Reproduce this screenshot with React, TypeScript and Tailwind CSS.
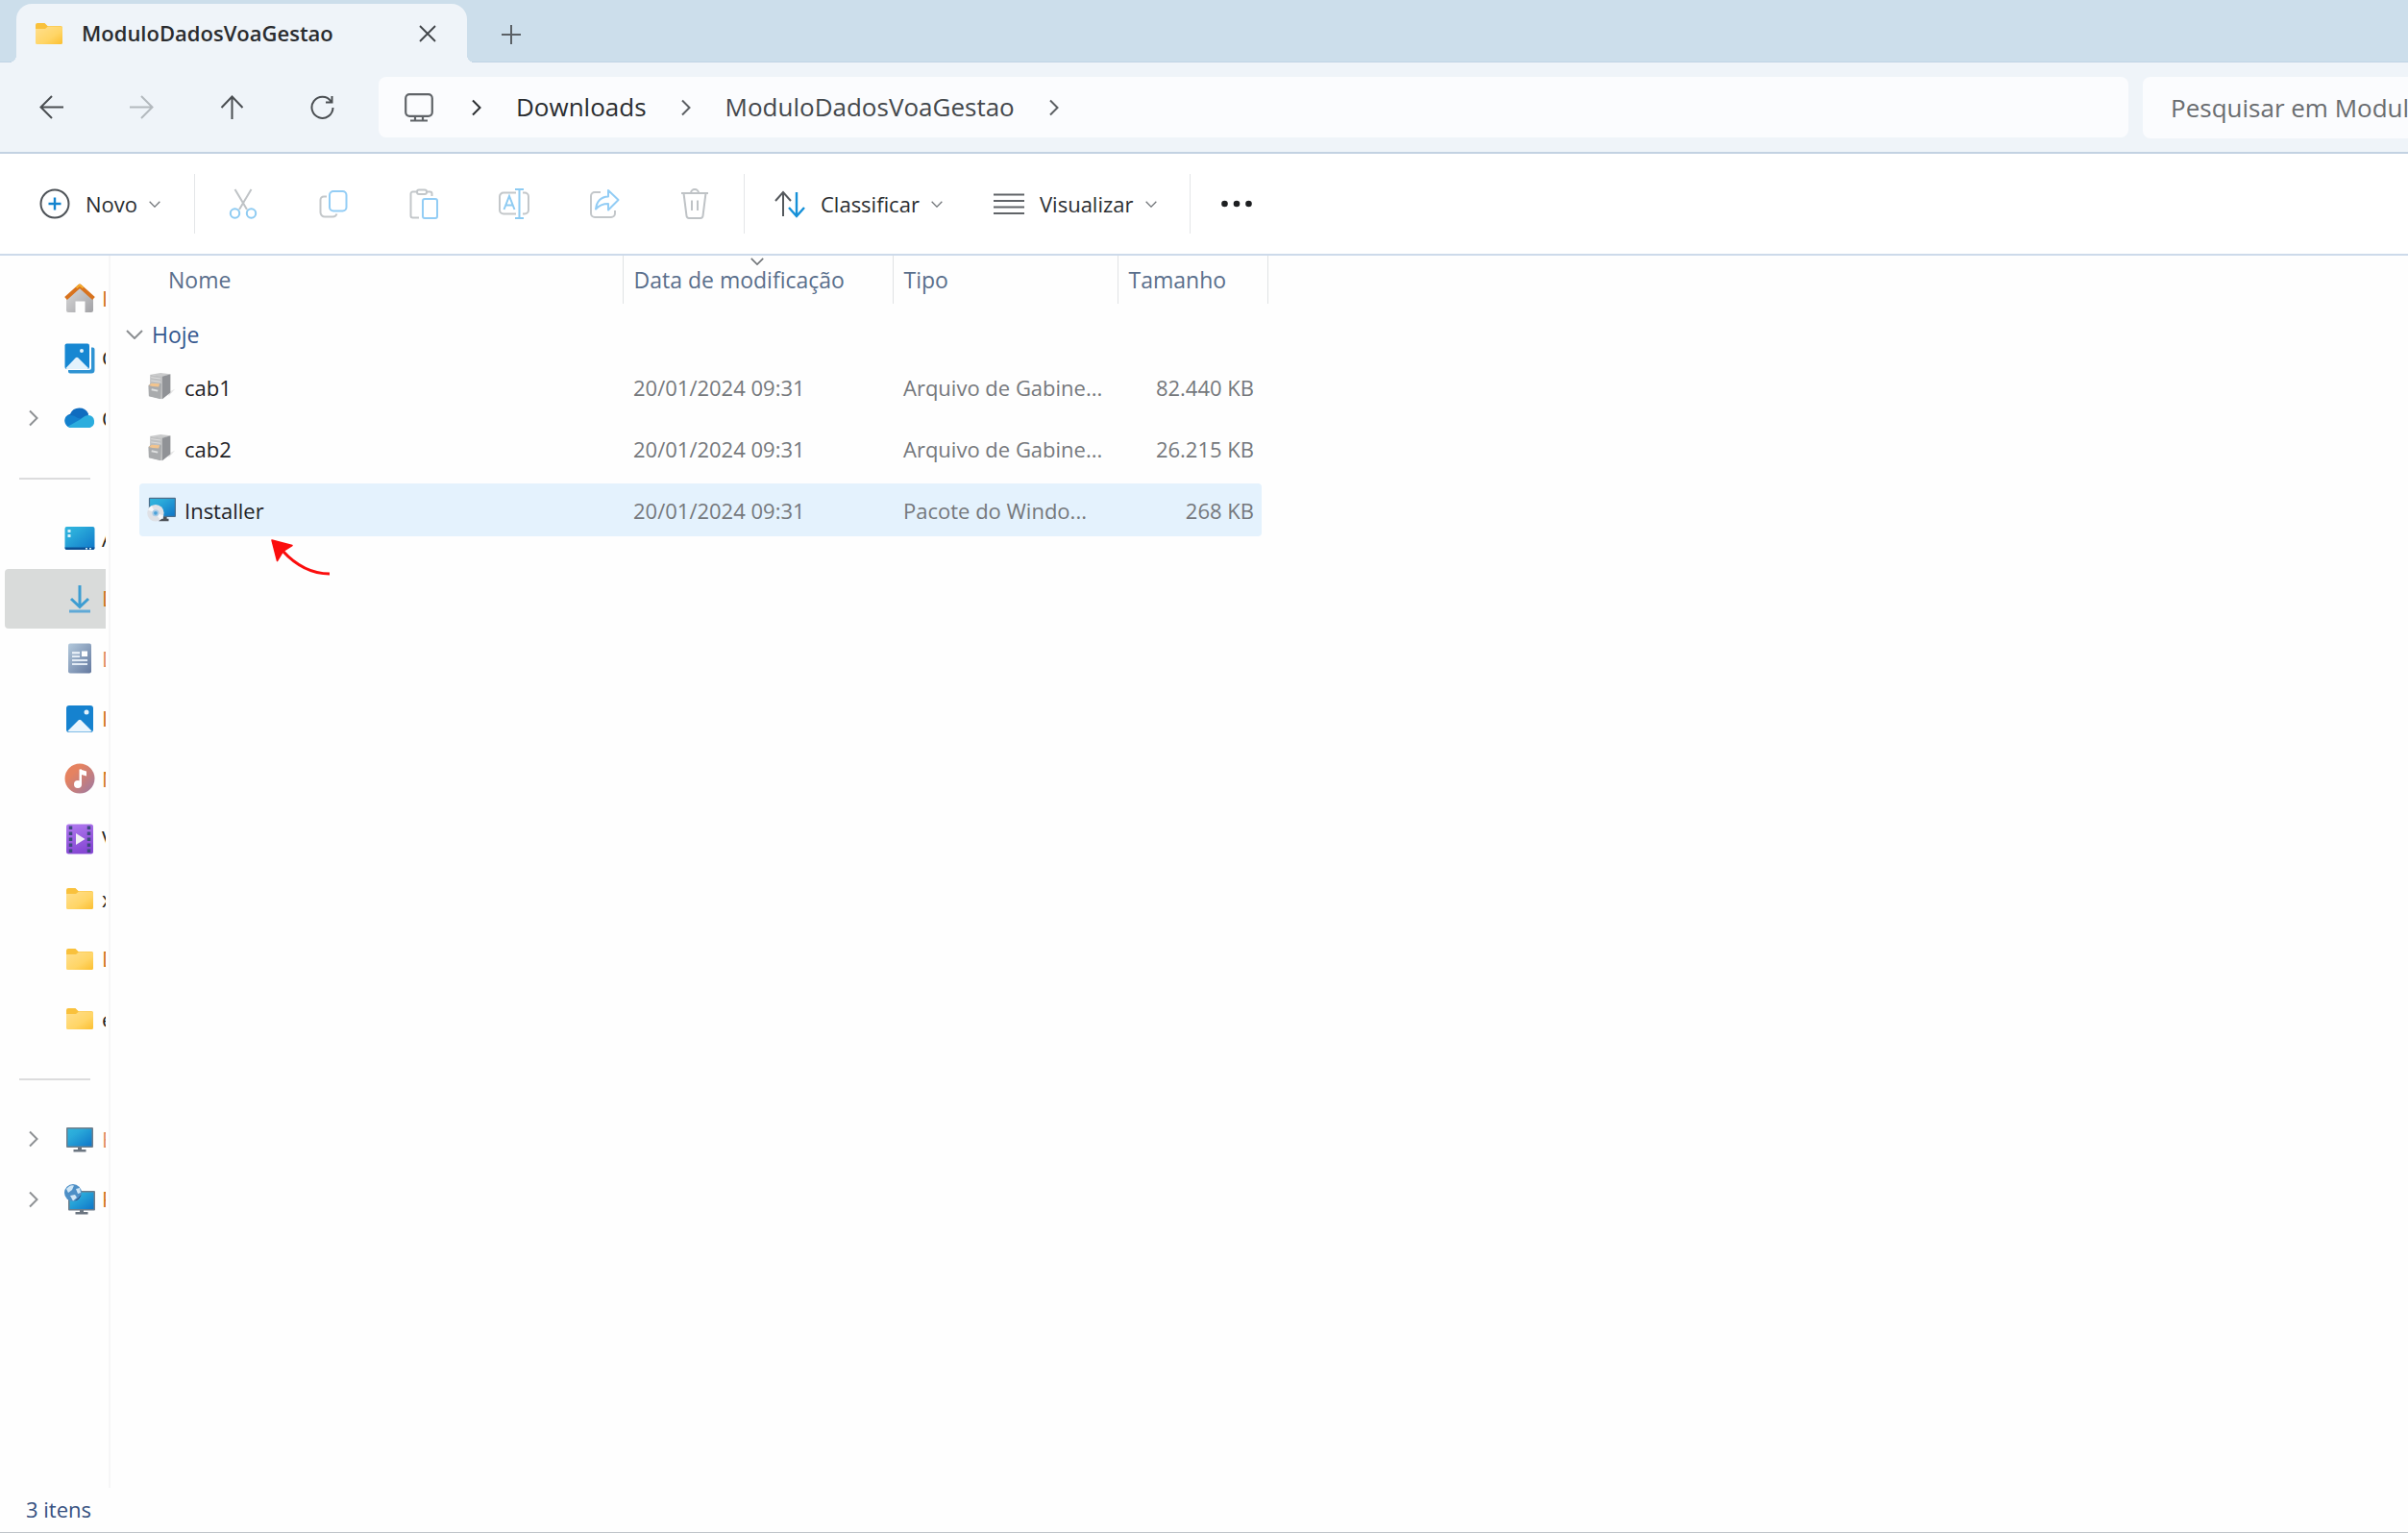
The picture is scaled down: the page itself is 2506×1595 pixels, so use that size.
import React, { useState } from "react";

interface IconProps {
  className?: string;
}

interface SidebarItem {
  label: string;
  icon: React.FC<IconProps>;
  expandable?: boolean;
  tone?: string;
}

interface FileRow {
  name: string;
  date: string;
  type: string;
  size: string;
  icon: React.FC<IconProps>;
}

const Chevron: React.FC<IconProps> = ({ className }) => (
  <svg viewBox="0 0 12 18" fill="none" stroke="currentColor" strokeWidth="2" className={className}>
    <path d="M2 1.500 9.500 9 2 16.500" />
  </svg>
);

const ChevronDown: React.FC<IconProps> = ({ className }) => (
  <svg viewBox="0 0 18 10" fill="none" stroke="currentColor" strokeWidth="2" className={className}>
    <path d="M1 1 9 9 17 1" />
  </svg>
);

const FolderIcon: React.FC<IconProps> = ({ className }) => (
  <svg viewBox="0 0 32 32" className={className}>
    <defs>
      <linearGradient id="folder" x1="0" y1="0" x2="1" y2="1">
        <stop offset="0" stopColor="#ffdf8e" />
        <stop offset="0.600" stopColor="#ffd566" />
        <stop offset="1" stopColor="#fbbf30" />
      </linearGradient>
    </defs>
    <path d="M2 7a2 2 0 0 1 2-2h7.500l3 3H28a2 2 0 0 1 2 2v4H2z" fill="#f9c13c" />
    <path d="M2 11h10l3-2.500h13.500A1.500 1.500 0 0 1 30 10v15.500a1.500 1.500 0 0 1-1.500 1.500h-25A1.500 1.500 0 0 1 2 25.500z" fill="url(#folder)" />
  </svg>
);

const HomeIcon: React.FC<IconProps> = ({ className }) => (
  <svg viewBox="0 0 32 32" className={className}>
    <defs>
      <linearGradient id="home" x1="0" y1="0" x2="1" y2="1">
        <stop offset="0" stopColor="#dcdcdc" />
        <stop offset="1" stopColor="#a2a2a6" />
      </linearGradient>
    </defs>
    <path d="M2 15 16 3l14 12v14a2 2 0 0 1-2 2h-6.500V19.500h-10V31H4a2 2 0 0 1-2-2z" fill="url(#home)" />
    <path d="M1.500 16.500 16 3.500l14.500 13" fill="none" stroke="#d8731e" strokeWidth="4" strokeLinejoin="round" />
    <path d="M12.500 5.500 16 2.500l3.500 3" fill="none" stroke="#f5ad2e" strokeWidth="2" strokeLinejoin="round" />
  </svg>
);

const GalleryIcon: React.FC<IconProps> = ({ className }) => (
  <svg viewBox="0 0 32 32" className={className}>
    <path d="M28 4.500h1.500A2 2 0 0 1 31.500 6.500V28a3.500 3.500 0 0 1-3.500 3.500H6a2 2 0 0 1-2-2V28h21.500a2.500 2.500 0 0 0 2.500-2.500z" fill="#2f93d3" />
    <rect x="0.500" y="0.500" width="25.500" height="26.500" rx="2" fill="#1787d2" />
    <path d="M1.500 26 11.500 15.500q1.500-1.500 3 0L25 26a2 2 0 0 1-1 1H2.500z" fill="#e3f2fc" />
    <circle cx="18" cy="8" r="2" fill="#e3f2fc" />
  </svg>
);

const CloudIcon: React.FC<IconProps> = ({ className }) => (
  <svg viewBox="0 0 32 32" className={className}>
    <path d="M7.500 25.500A7 7 0 0 1 6 11.800a10.500 10.500 0 0 1 19-.3l-1 8z" fill="#0f6cbf" />
    <path d="M7 26 6 25 19 15.500a8 8 0 0 1 6-2.500 6.600 6.600 0 0 1 1 13z" fill="#2badde" />
    <path d="M7.500 26A7.300 7.300 0 0 1 2 14q6-3 12 2l5 1z" fill="#1380cd" />
    <path d="M4 24.500 19 16l9 9q-1 1-3 1H7q-2 0-3-1.500z" fill="#2badde" />
  </svg>
);

const DesktopIcon: React.FC<IconProps> = ({ className }) => (
  <svg viewBox="0 0 32 32" className={className}>
    <defs>
      <linearGradient id="desk" x1="0" y1="0" x2="1" y2="1">
        <stop offset="0" stopColor="#30b4dd" />
        <stop offset="0.300" stopColor="#2aaada" />
        <stop offset="1" stopColor="#0f76c8" />
      </linearGradient>
    </defs>
    <rect x="0.500" y="4" width="31" height="24" rx="2" fill="url(#desk)" />
    <path d="M0.500 25.500h31V26a2 2 0 0 1-2 2h-27a2 2 0 0 1-2-2z" fill="#0c4f93" />
    <path d="M3.500 7H6.500v3h-3zM3.500 12H6.500v3h-3zM22 26h2v1.500h-2zM26 26h2v1.500h-2z" fill="#d7f1fb" />
  </svg>
);

const DownloadIcon: React.FC<IconProps> = ({ className }) => (
  <svg viewBox="0 0 32 32" fill="none" strokeWidth="3" className={className}>
    <path d="M16 2v22M7 16l9 8.500L25 16" stroke="#3d9dd2" />
    <path d="M5 29h22" stroke="#5fa9d6" />
  </svg>
);

const DocumentIcon: React.FC<IconProps> = ({ className }) => (
  <svg viewBox="0 0 32 32" className={className}>
    <defs>
      <linearGradient id="doc" x1="0" y1="0" x2="1" y2="1">
        <stop offset="0" stopColor="#b3c9dc" />
        <stop offset="1" stopColor="#64799f" />
      </linearGradient>
    </defs>
    <rect x="4" y="0.500" width="24" height="31" rx="2" fill="url(#doc)" />
    <path d="M8 9h8v2.500H8zM8 13h8v2H8zM8 17h16v2H8zM8 21h16v2H8z" fill="#e4ecf5" />
    <path d="M18 8.500h6V14h-6z" fill="#fff" />
  </svg>
);

const PictureIcon: React.FC<IconProps> = ({ className }) => (
  <svg viewBox="0 0 32 32" className={className}>
    <rect x="2" y="2" width="28" height="28" rx="3" fill="#1682cf" />
    <path d="M3.500 28.500 14.500 17.500q1.500-1.500 3 0l11 11q-.5 1-2 1h-21q-1.500 0-2-1z" fill="#eaf5fd" />
    <circle cx="23" cy="9" r="2.500" fill="#e3f2fc" />
  </svg>
);

const MusicIcon: React.FC<IconProps> = ({ className }) => (
  <svg viewBox="0 0 32 32" className={className}>
    <defs>
      <linearGradient id="music" x1="0" y1="0" x2="1" y2="1">
        <stop offset="0.300" stopColor="#e58260" />
        <stop offset="1" stopColor="#9b79a5" />
      </linearGradient>
    </defs>
    <circle cx="16" cy="16" r="15.500" fill="url(#music)" />
    <path d="M16.500 6.500 23 8.500v5l-5-1.500z" fill="#fff" />
    <path d="M15.500 6.500h2.500v16h-2.500z" fill="#fff" />
    <circle cx="14" cy="22" r="4" fill="#fff" />
  </svg>
);

const VideoIcon: React.FC<IconProps> = ({ className }) => (
  <svg viewBox="0 0 32 32" className={className}>
    <defs>
      <linearGradient id="video" x1="0" y1="0" x2="0.300" y2="1">
        <stop offset="0" stopColor="#b27af0" />
        <stop offset="1" stopColor="#8648d4" />
      </linearGradient>
    </defs>
    <rect x="2" y="0.500" width="28" height="31" rx="2.500" fill="url(#video)" />
    <path d="M6.500 2.500v28M25.500 2.500v28" stroke="#3c4a7d" strokeWidth="3.500" strokeDasharray="3.500 2.500" />
    <path d="M12 10v12l9.500-6z" fill="#f1eef6" />
  </svg>
);

const ComputerIcon: React.FC<IconProps> = ({ className }) => (
  <svg viewBox="0 0 32 32" className={className}>
    <path d="M14 24h4v3h4.500v2.500h-13V27H14z" fill="#6b7580" />
    <rect x="2" y="4" width="28" height="21" rx="1" fill="#6f7d8a" />
    <rect x="3.500" y="5.500" width="25" height="18" fill="url(#desk)" />
  </svg>
);

const NetworkIcon: React.FC<IconProps> = ({ className }) => (
  <svg viewBox="0 0 32 32" className={className}>
    <path d="M16 27h4v2h4.500v2.500h-13V29H16z" fill="#6b7580" />
    <rect x="4" y="7" width="28" height="20.500" rx="1" fill="#6f7d8a" />
    <rect x="5.500" y="8.500" width="25" height="17.500" fill="url(#desk)" />
    <circle cx="9" cy="9" r="9" fill="#4d8fc6" />
    <path d="M2 5q4-5 8-3.500L8 6 4 9zM6 12l5-1 2 3-4 3.500zM12 5l4-1 1 5-3 1z" fill="#cfe6f6" />
    <path d="M17.500 11a9 9 0 0 1-7 6.500q4-2 7-6.500z" fill="#283f72" />
  </svg>
);

const CabinetIcon: React.FC<IconProps> = ({ className }) => (
  <svg viewBox="0 0 32 32" className={className}>
    <path d="m24 22 7-3-7 8z" fill="#e6e6e6" />
    <path d="M4 3 15 1l11 1.500-9 3z" fill="#c9cacb" />
    <path d="M3.500 3 17 5v25L3 27z" fill="#bfc0c1" />
    <path d="m17 5 9-2.500V23l-9 7z" fill="#909296" />
    <path d="M4.500 6 15 7.500M4.500 9.500 15 11" stroke="#dedede" strokeWidth="1" />
    <path d="m1.500 15 3-2.500L16 13l-1 17-13-3z" fill="#a9abad" />
    <path d="m2 15 3-2.500 9 .5-1 3.500-7-.5z" fill="#f2c48e" />
    <path d="M5 19.500 12 21" stroke="#dfe0e0" strokeWidth="2" />
  </svg>
);

const InstallerIcon: React.FC<IconProps> = ({ className }) => (
  <svg viewBox="0 0 32 32" className={className}>
    <path d="M18 24h4v2.500h2V29H13v-2.500h5z" fill="#4c5157" />
    <rect x="2" y="3" width="30" height="21.500" rx="1" fill="#4c6f8c" />
    <rect x="3.300" y="4.300" width="27.400" height="18.900" fill="url(#desk)" />
    <circle cx="9.500" cy="20" r="9.300" fill="#dfe1e6" />
    <path d="M9.500 20 1 16.500a9.300 9.300 0 0 1 4-4.500zM9.500 20l9 3a9.300 9.300 0 0 1-4 4.500z" fill="#f6f7f9" />
    <circle cx="9.500" cy="20" r="3.800" fill="#aacbe6" />
    <circle cx="9.500" cy="20" r="2" fill="#4ba1d8" />
  </svg>
);

const toolbarIcons: { label: string; drawing: React.ReactNode }[] = [
  {
    label: "Recortar",
    drawing: (
      <>
        <path d="M7.500 1 20 22M24.500 1 12 22" stroke="#bfc3c6" />
        <circle cx="7.500" cy="26" r="4.700" stroke="#8ecbf2" />
        <circle cx="24.500" cy="26" r="4.700" stroke="#8ecbf2" />
      </>
    ),
  },
  {
    label: "Copiar",
    drawing: (
      <>
        <path d="M9 8.500H6A3.500 3.500 0 0 0 2.500 12v13A4.500 4.500 0 0 0 7 29.500h8.500q3 0 4-3" stroke="#c3c7ca" />
        <rect x="12" y="3" width="17.500" height="20.500" rx="4" stroke="#93cdf5" />
      </>
    ),
  },
  {
    label: "Colar",
    drawing: (
      <>
        <path d="M9 3.500H4.500A2 2 0 0 0 2.500 5.500v23a2 2 0 0 0 2 2H11M19 3.500h3.500A2 2 0 0 1 24.500 5.500V8" stroke="#c3c7ca" />
        <rect x="9" y="1.500" width="10" height="4.500" rx="2" stroke="#c3c7ca" />
        <rect x="15" y="11" width="15" height="20" rx="2" stroke="#93cdf5" />
      </>
    ),
  },
  {
    label: "Renomear",
    drawing: (
      <>
        <path d="M18 4.500H5A4 4 0 0 0 1 8.500v14a4 4 0 0 0 4 4h13M25 4.500h2a4 4 0 0 1 4 4v14a4 4 0 0 1-4 4h-2" stroke="#c3c7ca" />
        <path d="m5.500 22 5.500-14 5.500 14M7.500 17.500h7M17 1h9M17 31h9M21.500 1v30" stroke="#8ecbf2" />
      </>
    ),
  },
  {
    label: "Compartilhar",
    drawing: (
      <>
        <path d="M12 4H6a4 4 0 0 0-4 4v18a4 4 0 0 0 4 4h17a4 4 0 0 0 4-4v-3" stroke="#c3c7ca" />
        <path d="M20 2v6.500Q8.500 9 7 21.500 12 16 20 16v6.500L30.500 12z" stroke="#93cdf5" strokeLinejoin="round" />
      </>
    ),
  },
  {
    label: "Excluir",
    drawing: (
      <path d="M2 5h28M12 5a4 4 0 0 1 8 0M4.500 5l3 23.500a2.500 2.500 0 0 0 2.500 2.500h12a2.500 2.500 0 0 0 2.500-2.500l3-23.500M13 12.500v10.500M19 12.500v10.500" stroke="#bfc3c6" />
    ),
  },
];

const sidebarItems: (SidebarItem | null)[] = [
  { label: "Início", icon: HomeIcon, tone: "text-[#d0701c]" },
  { label: "Galeria", icon: GalleryIcon },
  { label: "OneDrive", icon: CloudIcon, expandable: true },
  null,
  { label: "Área de Trabalho", icon: DesktopIcon },
  { label: "Downloads", icon: DownloadIcon, tone: "text-[#d0701c]" },
  { label: "Documentos", icon: DocumentIcon, tone: "text-[#e08a62]" },
  { label: "Imagens", icon: PictureIcon, tone: "text-[#d0701c]" },
  { label: "Músicas", icon: MusicIcon, tone: "text-[#d0701c]" },
  { label: "Vídeos", icon: VideoIcon },
  { label: "x", icon: FolderIcon },
  { label: "D", icon: FolderIcon, tone: "text-[#d0701c]" },
  { label: "e", icon: FolderIcon },
  null,
  { label: "Este Computador", icon: ComputerIcon, expandable: true, tone: "text-[#e08a62]" },
  { label: "Rede", icon: NetworkIcon, expandable: true, tone: "text-[#d0701c]" },
];

const files: FileRow[] = [
  { name: "cab1", date: "20/01/2024 09:31", type: "Arquivo de Gabine...", size: "82.440 KB", icon: CabinetIcon },
  { name: "cab2", date: "20/01/2024 09:31", type: "Arquivo de Gabine...", size: "26.215 KB", icon: CabinetIcon },
  { name: "Installer", date: "20/01/2024 09:31", type: "Pacote do Windo...", size: "268 KB", icon: InstallerIcon },
];

const TabStrip: React.FC = () => (
  <div className="flex h-16 items-end bg-[#ccdeeb] pl-[17px]">
    <div className="relative z-10 -mb-px flex h-[61px] w-[469px] items-center rounded-t-2xl bg-[#eff4f9] pr-8 pl-[18px] before:absolute before:bottom-0 before:-left-2 before:size-2 before:bg-[radial-gradient(circle_at_0_0,transparent_8px,#eff4f9_8px)] after:absolute after:-right-2 after:bottom-0 after:size-2 after:bg-[radial-gradient(circle_at_100%_0,transparent_8px,#eff4f9_8px)]">
      <FolderIcon className="size-8" />
      <span className="ml-[18px] flex-1 text-[22px] font-semibold text-[#2a2c2f]">ModuloDadosVoaGestao</span>
      <button aria-label="Fechar guia" className="text-[#3f4347]">
        <svg viewBox="0 0 18 18" fill="none" stroke="currentColor" strokeWidth="1.800" className="size-[18px]">
          <path d="M1 1 17 17M17 1 1 17" />
        </svg>
      </button>
    </div>
    <button aria-label="Nova guia" className="mb-[18px] ml-9 text-[#5b6166]">
      <svg viewBox="0 0 20 20" fill="none" stroke="currentColor" strokeWidth="2" className="size-5">
        <path d="M10 0v20M0 10h20" />
      </svg>
    </button>
  </div>
);

const NavigationBar: React.FC = () => (
  <div className="flex h-[96px] items-center border-t border-b-2 border-t-[#c0d3e4] border-b-[#c3d2e2] bg-[#eff4f9] pl-[41px] text-[#4a4e52]">
    <div className="flex w-[353px] shrink-0 gap-[69px]">
      <button aria-label="Voltar">
        <svg viewBox="0 0 25 25" fill="none" stroke="currentColor" strokeWidth="2" className="size-[25px]">
          <path d="M13 1 1.500 12.500 13 24M1.500 12.500H25" />
        </svg>
      </button>
      <button aria-label="Avançar" className="text-[#b3b9be]">
        <svg viewBox="0 0 25 25" fill="none" stroke="currentColor" strokeWidth="2" className="size-[25px]">
          <path d="M12 1 23.500 12.500 12 24M23.500 12.500H0" />
        </svg>
      </button>
      <button aria-label="Acima">
        <svg viewBox="0 0 25 25" fill="none" stroke="currentColor" strokeWidth="2" className="size-[25px]">
          <path d="M1.500 13 12.500 1.500 23.500 13M12.500 1.500V25" />
        </svg>
      </button>
      <button aria-label="Atualizar">
        <svg viewBox="0 0 25 25" fill="none" stroke="currentColor" strokeWidth="2" className="size-[25px]">
          <path d="M22.500 1v6.500H16M21.500 6.500A11 11 0 1 0 23.500 13" />
        </svg>
      </button>
    </div>
    <nav aria-label="Caminho" className="flex h-[63px] flex-1 items-center rounded-lg bg-[#fbfcfe] pl-[27px] text-[26px] text-[#2a2d30]">
      <svg viewBox="0 0 30 30" fill="none" stroke="#606468" strokeWidth="2.200" className="size-[30px]">
        <rect x="1.200" y="1.200" width="27.600" height="22.600" rx="4" />
        <path d="M11 24v4M19 24v4M6 28.500h18" />
      </svg>
      <Chevron className="ml-[39px] h-[18px] w-3" />
      <a href="#downloads" className="ml-[35px]">Downloads</a>
      <Chevron className="ml-[35px] h-[18px] w-3 text-[#5b5f63]" />
      <a href="#modulo" className="ml-[35px] text-[#44484c]">ModuloDadosVoaGestao</a>
      <Chevron className="ml-[35px] h-[18px] w-3 text-[#5b5f63]" />
    </nav>
    <input
      aria-label="Pesquisar"
      placeholder="Pesquisar em ModuloDadosVoaGestao"
      className="ml-[15px] h-[64px] w-[276px] shrink-0 rounded-l-lg bg-[#fbfcfe] pl-[29px] text-[26px] outline-none placeholder:text-[#6a6d70]"
    />
  </div>
);

const Toolbar: React.FC = () => (
  <div className="flex h-[106px] items-center border-b-2 border-[#cddaea] bg-white text-[22px] text-[#2b2e31]">
    <div className="flex h-[62px] w-[203px] items-center border-r border-[#e4e6e8] pl-[41px]">
      <button className="flex items-center">
        <svg viewBox="0 0 32 32" fill="none" strokeWidth="2" className="size-8">
          <circle cx="16" cy="16" r="14.500" stroke="#4e5358" />
          <path d="M16 9.500v13M9.500 16h13" stroke="#1384cf" strokeWidth="2.400" />
        </svg>
        <span className="mr-3 ml-4">Novo</span>
        <ChevronDown className="h-[7px] w-3 text-[#75797d]" />
      </button>
    </div>
    <div className="flex h-[62px] w-[572px] items-center justify-center border-r border-[#e4e6e8] pr-px">
      {toolbarIcons.map((item) => (
        <button key={item.label} aria-label={item.label} className="flex w-[94px] justify-center">
          <svg viewBox="0 0 32 32" fill="none" strokeWidth="2" className="size-8">
            {item.drawing}
          </svg>
        </button>
      ))}
    </div>
    <div className="flex h-[62px] w-[464px] items-center border-r border-[#e4e6e8] pl-[31px]">
      <button className="flex w-[228px] items-center">
        <svg viewBox="0 0 32 32" fill="none" strokeWidth="2" className="size-8">
          <path d="M1 13 9 4l8 9M9 4v25" stroke="#55595d" />
          <path d="M15 20l8 9 8-9M23 29V4" stroke="#1590d8" strokeWidth="2.400" />
        </svg>
        <span className="mr-3 ml-4">Classificar</span>
        <ChevronDown className="h-[7px] w-3 text-[#75797d]" />
      </button>
      <button className="flex items-center">
        <svg viewBox="0 0 32 32" fill="none" stroke="#606468" strokeWidth="2" className="size-8">
          <path d="M0 6.500h32M0 13h32M0 19.500h32M0 26h32" />
        </svg>
        <span className="mr-3 ml-4">Visualizar</span>
        <ChevronDown className="h-[7px] w-3 text-[#75797d]" />
      </button>
    </div>
    <button aria-label="Ver mais" className="ml-8">
      <svg viewBox="0 0 32 8" fill="#1d1f21" className="h-2 w-8">
        <circle cx="3.500" cy="4" r="3.300" />
        <circle cx="16" cy="4" r="3.300" />
        <circle cx="28.500" cy="4" r="3.300" />
      </svg>
    </button>
  </div>
);

const Sidebar: React.FC = () => (
  <aside className="w-[115px] shrink-0 border-r-2 border-[#f6f6f7] pt-[13px]">
    <ul className="grid h-[1000px] w-[110px] grid-cols-1 grid-rows-16 overflow-hidden">
      {sidebarItems.map((item, i) =>
        item === null ? (
          <li key={i} className="flex items-center pr-4 pl-5">
            <hr className="w-full border-t-2 border-[#dcdcdd]" />
          </li>
        ) : (
          <li key={i} className={item.label === "Downloads" ? "ml-[5px] rounded-l bg-[#d9dbda]" : "ml-[5px]"}>
            <button className="flex h-full w-full items-center text-[22px] whitespace-nowrap">
              <span className="flex w-[62px] shrink-0 pl-6 text-[#8e9194]">
                {item.expandable && <Chevron className="h-[18px] w-3" />}
              </span>
              <item.icon className="size-8 shrink-0" />
              <span className={item.tone ? "ml-[7px] " + item.tone : "ml-[7px] text-[#1d1f21]"}>{item.label}</span>
            </button>
          </li>
        )
      )}
    </ul>
  </aside>
);

const FileTable: React.FC = () => {
  const [selected, setSelected] = useState("Installer");
  const [open, setOpen] = useState(true);

  return (
    <table className="ml-[14px] w-[1190px] table-fixed border-collapse self-start text-left text-[22px] text-[#75787c]">
      <colgroup>
        <col className="w-[519px]" />
        <col className="w-[281px]" />
        <col className="w-[234px]" />
        <col className="w-[156px]" />
      </colgroup>
      <thead className="text-[23px] text-[#5a6f8c]">
        <tr className="h-[50px]">
          <th className="border-r border-[#e0e2e4] pl-[46px] font-normal">Nome</th>
          <th className="relative border-r border-[#e0e2e4] pl-[11px] font-normal">
            <ChevronDown className="absolute top-[2px] left-[132px] h-2 w-[14px] text-[#6f7377]" />
            Data de modificação
          </th>
          <th className="border-r border-[#e0e2e4] pl-[11px] font-normal">Tipo</th>
          <th className="border-r border-[#e0e2e4] pl-[11px] font-normal">Tamanho</th>
        </tr>
      </thead>
      <tbody>
        <tr className="h-14">
          <td colSpan={4} className="pt-2">
            <button className="flex items-center gap-[9px] text-[23px] text-[#35588f]" onClick={() => setOpen(!open)}>
              <ChevronDown className="ml-[2px] h-[10px] w-[18px] text-[#8b8e91]" />
              Hoje
            </button>
          </td>
        </tr>
        {open &&
          files.map((file) => {
            const active = file.name === selected;
            const fill = active ? "flex h-[55px] items-center pt-[2px] bg-[#e4f2fd]" : "flex h-[55px] items-center pt-[2px]";
            return (
              <tr key={file.name} className="h-16 align-top" onClick={() => setSelected(file.name)}>
                <td className="relative pt-[3px] pl-4">
                  <div className={fill + " rounded-l pl-2 text-[#1f2226]"}>
                    <file.icon className="mb-1 size-[30px]" />
                    <span className="ml-[9px]">{file.name}</span>
                  </div>
                  {file.name === "Installer" && (
                    <svg viewBox="0 0 62 38" className="absolute top-[61px] left-[153px] z-10 h-[38px] w-[62px]">
                      <path d="M61 36Q34 36 12 12" fill="none" stroke="#fb0d0d" strokeWidth="3" />
                      <path d="M1 1 22 6.500 12.500 12.500 6.500 22.500z" fill="#fb0d0d" stroke="#fb0d0d" strokeWidth="1.500" strokeLinejoin="round" />
                    </svg>
                  )}
                </td>
                <td className="pt-[3px]">
                  <div className={fill + " pl-[11px]"}>{file.date}</div>
                </td>
                <td className="pt-[3px]">
                  <div className={fill + " pl-[11px]"}>{file.type}</div>
                </td>
                <td className="pt-[3px] pr-[6px]">
                  <div className={fill + " justify-end rounded-r pr-2"}>{file.size}</div>
                </td>
              </tr>
            );
          })}
      </tbody>
    </table>
  );
};

const App: React.FC = () => {
  return (
    <div className="flex min-h-screen flex-col overflow-hidden border-b border-[#bfc4c9] bg-[#fefefe] font-['Open_Sans',sans-serif]">
      <TabStrip />
      <NavigationBar />
      <Toolbar />
      <main className="flex flex-1">
        <Sidebar />
        <FileTable />
      </main>
      <footer className="flex h-[46px] items-center pb-px pl-[27px] text-[22px] text-[#35507f]">3 itens</footer>
    </div>
  );
};

export default App;
